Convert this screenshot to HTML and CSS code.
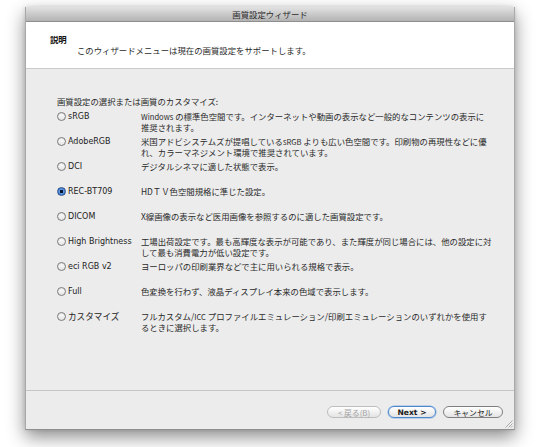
FILE: index.html
```html
<!DOCTYPE html>
<html lang="ja">
<head>
<meta charset="utf-8">
<title>画質設定ウィザード</title>
<link rel="stylesheet" href="styles.css">
</head>
<body>
<div class="window">
  <div class="titlebar">画質設定ウィザード</div>
  <div class="header">
    <div class="h-title">説明</div>
    <div class="h-sub">このウィザードメニューは現在の画質設定をサポートします。</div>
  </div>
  <div class="content">
    <div class="prompt">画質設定の選択または画質のカスタマイズ:</div>
    <div class="options">
      <div class="opt"><span class="radio"></span><span class="label">sRGB</span><span class="desc"><span class="l">Windows</span> の標準色空間です。インターネットや動画の表示など一般的なコンテンツの表示に<br>推奨されます。</span></div>
      <div class="opt"><span class="radio"></span><span class="label">AdobeRGB</span><span class="desc">米国アドビシステムズが提唱している<span class="l">sRGB</span> よりも広い色空間です。印刷物の再現性などに優<br>れ、カラーマネジメント環境で推奨されています。</span></div>
      <div class="opt"><span class="radio"></span><span class="label">DCI</span><span class="desc">デジタルシネマに適した状態で表示。</span></div>
      <div class="opt"><span class="radio checked"></span><span class="label">REC-BT709</span><span class="desc">HDＴＶ色空間規格に準じた設定。</span></div>
      <div class="opt"><span class="radio"></span><span class="label">DICOM</span><span class="desc">X線画像の表示など医用画像を参照するのに適した画質設定です。</span></div>
      <div class="opt"><span class="radio"></span><span class="label">High Brightness</span><span class="desc">工場出荷設定です。最も高輝度な表示が可能であり、また輝度が同じ場合には、他の設定に対<br>して最も消費電力が低い設定です。</span></div>
      <div class="opt"><span class="radio"></span><span class="label">eci RGB v2</span><span class="desc">ヨーロッパの印刷業界などで主に用いられる規格で表示。</span></div>
      <div class="opt"><span class="radio"></span><span class="label">Full</span><span class="desc">色変換を行わず、液晶ディスプレイ本来の色域で表示します。</span></div>
      <div class="opt"><span class="radio"></span><span class="label jp">カスタマイズ</span><span class="desc">フルカスタム/<span class="l">ICC</span> プロファイルエミュレーション/印刷エミュレーションのいずれかを使用す<br>るときに選択します。</span></div>
    </div>
  </div>
  <div class="footer">
    <span class="btn btn-back">&lt; 戻る(B)</span>
    <span class="btn btn-next">Next &gt;</span>
    <span class="btn btn-cancel">キャンセル</span>
    <svg class="grip" width="9" height="9" viewBox="0 0 9 9"><path d="M8.5 1.5 L1.5 8.5 M8.5 4.5 L4.5 8.5 M8.5 7 L7 8.5" stroke="#9a9a9a" stroke-width="0.8" fill="none"/></svg>
  </div>
</div>
</body>
</html>
```

FILE: styles.css
```css
* { box-sizing: border-box; }
html, body { margin: 0; padding: 0; }
body {
  width: 540px;
  height: 447px;
  background: #ffffff;
  overflow: hidden;
  font-family: "Noto Sans CJK JP", "DejaVu Sans", sans-serif;
  color: #2a2a2a;
}
.window {
  position: relative;
  margin: 7px 0 0 25px;
  width: 490px;
  border-left: 1px solid #a9a9a9;
  border-right: 1px solid #a9a9a9;
  border-bottom: 1px solid #8f8f8f;
  box-shadow: 0 7px 17px rgba(0,0,0,0.45), 0 0 4px rgba(0,0,0,0.12);
}
.titlebar {
  height: 15px;
  line-height: 14px;
  font-size: 8.4px;
  text-align: center;
  color: #2b2b2b;
  background: linear-gradient(#e2e2e2, #b3b3b3);
  border-bottom: 1px solid #8e8e8e;
}
.header {
  height: 47px;
  background: #ffffff;
  border-bottom: 1px solid #cbcbcb;
  padding: 12px 0 0 24px;
  font-size: 8.4px;
  line-height: 11px;
}
.h-title { font-weight: bold; color: #111; }
.h-sub { padding-left: 27px; }
.content {
  height: 321px;
  background: #ececec;
  padding: 27px 0 0 31px;
}
.prompt {
  font-size: 8.4px;
  line-height: 10px;
  margin-bottom: 5px;
}
.opt {
  display: grid;
  grid-template-columns: 11px 73px auto;
  height: 25px;
  align-items: start;
  line-height: 11px;
}
.radio {
  width: 9px;
  height: 9px;
  margin-top: 1px;
  border-radius: 50%;
  border: 1px solid #7a7a7a;
  background: linear-gradient(#ffffff, #e4e4e4);
  box-shadow: inset 0 1px 1px rgba(0,0,0,0.12);
}
.radio.checked {
  border-color: #2f4f86;
  background: radial-gradient(circle at 50% 50%, #0b1630 0, #0b1630 1.5px, #5a98e4 2px, #2d67c0 100%);
  box-shadow: none;
}
.label {
  font-family: "DejaVu Sans", "Noto Sans CJK JP", sans-serif;
  font-size: 8px;
  color: #222;
  white-space: nowrap;
}
.label.jp {
  font-family: "Noto Sans CJK JP", sans-serif;
  font-size: 8.6px;
}
.desc {
  font-size: 8.4px;
  white-space: nowrap;
}
.desc .l { font-size: 7.6px; }
.footer {
  height: 39px;
  background: #ececec;
  border-top: 1px solid #c6c6c6;
  display: flex;
  justify-content: flex-end;
  align-items: flex-start;
  gap: 7px;
  padding: 15px 11px 0 0;
}
.btn {
  display: flex;
  align-items: center;
  justify-content: center;
  height: 12px;
  border-radius: 6px;
  border: 1px solid #7f7f7f;
  background: linear-gradient(#ffffff, #f0f0f0 55%, #e4e4e4);
  font-size: 7.8px;
  color: #1a1a1a;
  white-space: nowrap;
}
.btn-back { width: 54px; color: #a3a3a3; border-color: #bdbdbd; }
.btn-next {
  width: 48px;
  border-color: #4e86cc;
  box-shadow: 0 0 0 0.6px #8db4e6;
  font-family: "DejaVu Sans", sans-serif;
  font-size: 7.6px;
  font-weight: bold;
}
.btn-cancel { width: 60px; }
.grip {
  position: absolute;
  right: 1px;
  bottom: 1px;
}
```
